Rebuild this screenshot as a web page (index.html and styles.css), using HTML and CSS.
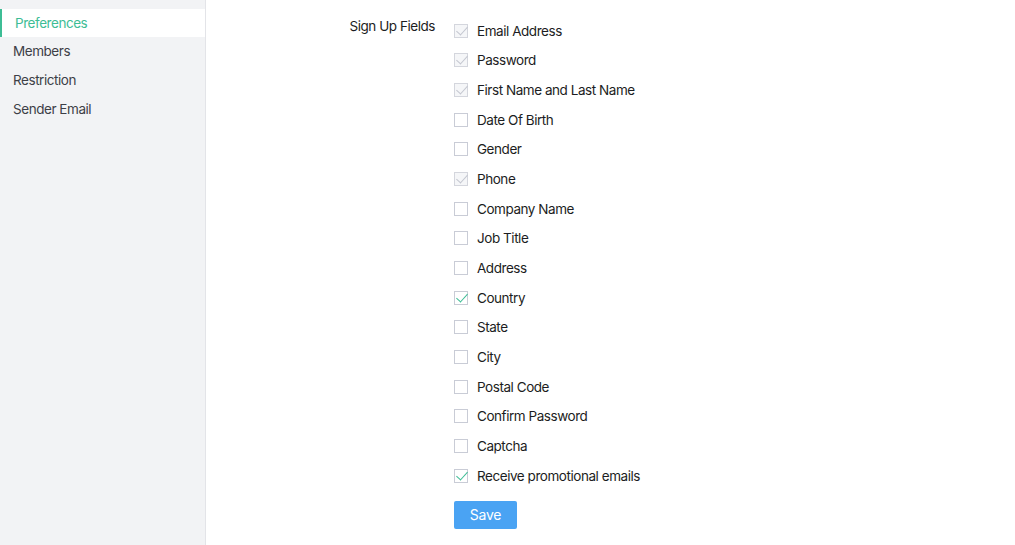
FILE: index.html
```html
<!DOCTYPE html>
<html>
<head>
<meta charset="utf-8">
<link rel="stylesheet" href="styles.css">
</head>
<body>
<div class="layout">
  <nav class="sidebar">
    <div class="nav-item active">Preferences</div>
    <div class="nav-item">Members</div>
    <div class="nav-item">Restriction</div>
    <div class="nav-item">Sender Email</div>
  </nav>
  <main class="main">
    <div class="form-row">
      <div class="label">Sign Up Fields</div>
      <div class="fields">
        <label class="field"><span class="cb checked disabled"></span>Email Address</label>
        <label class="field"><span class="cb checked disabled"></span>Password</label>
        <label class="field"><span class="cb checked disabled"></span>First Name and Last Name</label>
        <label class="field"><span class="cb"></span>Date Of Birth</label>
        <label class="field"><span class="cb"></span>Gender</label>
        <label class="field"><span class="cb checked disabled"></span>Phone</label>
        <label class="field"><span class="cb"></span>Company Name</label>
        <label class="field"><span class="cb"></span>Job Title</label>
        <label class="field"><span class="cb"></span>Address</label>
        <label class="field"><span class="cb checked"></span>Country</label>
        <label class="field"><span class="cb"></span>State</label>
        <label class="field"><span class="cb"></span>City</label>
        <label class="field"><span class="cb"></span>Postal Code</label>
        <label class="field"><span class="cb"></span>Confirm Password</label>
        <label class="field"><span class="cb"></span>Captcha</label>
        <label class="field"><span class="cb checked"></span>Receive promotional emails</label>
        <button class="save">Save</button>
      </div>
    </div>
  </main>
</div>
</body>
</html>
```

FILE: styles.css
```css
html, body {
  margin: 0;
  padding: 0;
  background: #fff;
  font-family: Inter, "Noto Sans", sans-serif;
}
.layout {
  display: flex;
  height: 545px;
}
.sidebar {
  width: 205px;
  flex: none;
  background: #f2f3f5;
  border-right: 1px solid #e3e4e8;
  padding-top: 9px;
}
.nav-item {
  height: 29px;
  line-height: 28px;
  padding-left: 13px;
  font-size: 13.5px;
  letter-spacing: -0.45px;
  color: #3d3f47;
}
.nav-item.active {
  height: 28px;
  background: #fff;
  color: #3dbd95;
  border-left: 2px solid #3dbd95;
}
.main {
  flex: 1;
}
.form-row {
  display: flex;
  padding-top: 16px;
}
.label {
  width: 229px;
  text-align: right;
  font-size: 13.5px;
  letter-spacing: -0.45px;
  color: #1c1d22;
  line-height: 20px;
  margin-right: 19px;
}
.fields {
  display: flex;
  flex-direction: column;
  align-items: flex-start;
}
.field {
  display: flex;
  align-items: center;
  height: 29.67px;
  font-size: 13.5px;
  letter-spacing: -0.45px;
  color: #1c1d22;
}
.cb {
  width: 14px;
  height: 14px;
  box-sizing: border-box;
  border: 1px solid #c9ccd6;
  background: #fff;
  margin-right: 9px;
  position: relative;
  flex: none;
}
.cb.disabled {
  background: #f5f6f8;
  border-color: #d4d6dd;
}
.cb.checked::after {
  content: "";
  position: absolute;
  left: 3.5px;
  top: -1px;
  width: 5px;
  height: 10px;
  border-right: 1px solid #3dbd95;
  border-bottom: 1px solid #3dbd95;
  transform: rotate(42deg);
}
.cb.checked.disabled::after {
  border-color: #c3c6cf;
}
.save {
  margin-top: 10px;
  width: 63px;
  height: 28px;
  border: none;
  border-radius: 2px;
  background: #4aa3f3;
  color: #fff;
  font-family: Inter, "Noto Sans", sans-serif;
  font-size: 14px;
  letter-spacing: -0.2px;
  padding: 0;
}
```
